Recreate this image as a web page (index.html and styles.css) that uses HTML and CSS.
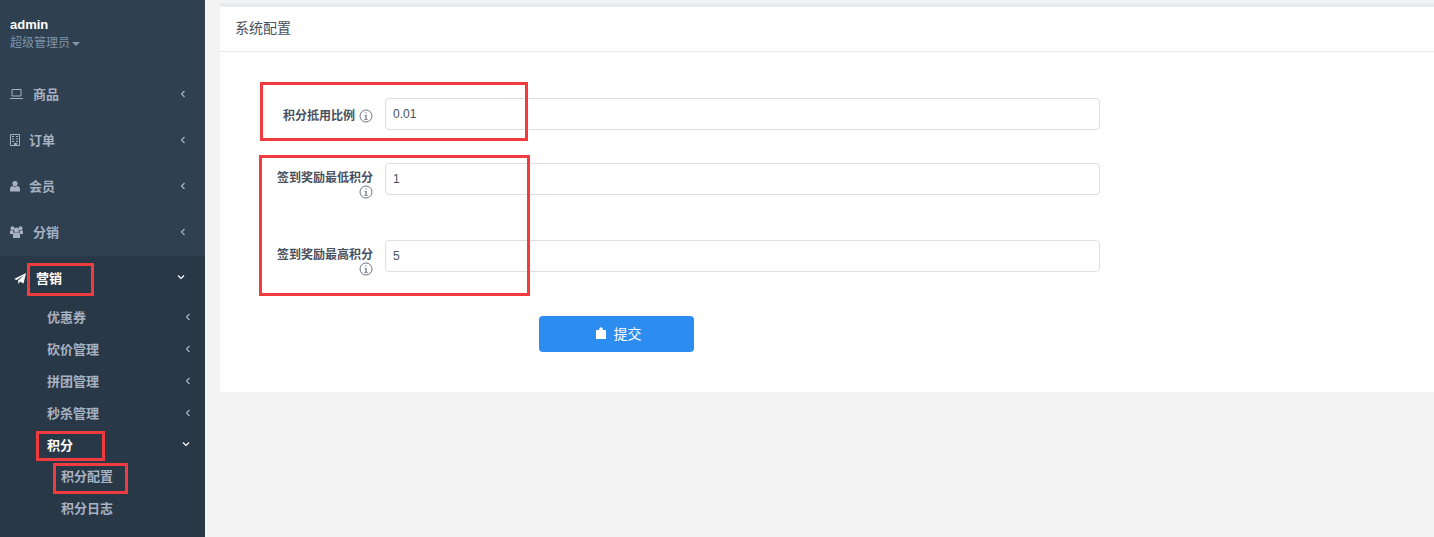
FILE: index.html
```html
<!DOCTYPE html>
<html lang="zh-CN">
<head>
  <meta charset="UTF-8">
  <meta name="viewport" content="width=device-width, initial-scale=1.0">
  <title>系统配置</title>
  <link rel="stylesheet" href="styles.css">
</head>
<body>
  <div class="layout">

    <aside class="sidebar">
      <div class="profile">
        <div class="profile-name">admin</div>
        <div class="profile-role">超级管理员<span class="caret"></span></div>
      </div>

      <ul class="menu">
        <li class="menu-item">
          <svg class="menu-icon icon-wide" viewBox="0 0 13 12"><path d="M2 1.500h9v6.500H2zM0 10.500h13" fill="none" stroke="currentColor"/></svg>
          <span class="menu-text">商品</span>
          <svg class="arrow" viewBox="0 0 6 8"><path d="M4.500 1 1.500 4l3 3" fill="none" stroke="currentColor" stroke-width="1.2"/></svg>
        </li>
        <li class="menu-item">
          <svg class="menu-icon icon-narrow" viewBox="0 0 10 12"><path d="M.5 .5h9v11h-9z" fill="none" stroke="currentColor"/><path d="M2 2.500h2M6 2.500h2M2 5h2M6 5h2M2 7.500h2M6 7.500h2" stroke="currentColor"/><path d="M4 9h3v2.500H4z" fill="currentColor"/></svg>
          <span class="menu-text">订单</span>
          <svg class="arrow" viewBox="0 0 6 8"><path d="M4.500 1 1.500 4l3 3" fill="none" stroke="currentColor" stroke-width="1.2"/></svg>
        </li>
        <li class="menu-item">
          <svg class="menu-icon icon-narrow" viewBox="0 0 10 12"><circle cx="5" cy="3.500" r="2.600" fill="currentColor"/><path d="M0 11.500V9c0-2 1.500-3 2.800-3 .6.500 1.300.8 2.200.8S6.600 6.500 7.200 6C8.500 6 10 7 10 9v2.500z" fill="currentColor"/></svg>
          <span class="menu-text">会员</span>
          <svg class="arrow" viewBox="0 0 6 8"><path d="M4.500 1 1.500 4l3 3" fill="none" stroke="currentColor" stroke-width="1.2"/></svg>
        </li>
        <li class="menu-item">
          <svg class="menu-icon icon-wide" viewBox="0 0 13 12"><circle cx="2.500" cy="2.200" r="2" fill="currentColor"/><circle cx="10.500" cy="2.200" r="2" fill="currentColor"/><circle cx="6.500" cy="4" r="2.500" fill="currentColor"/><path d="M0 8V5.500c0-1 1-1.200 2-1.200L3.500 5v3zM13 8V5.500c0-1-1-1.200-2-1.200L9.500 5v3zM3 12V8.500C3 7 4 6.500 5 6.500h3c1 0 2 .5 2 2V12z" fill="currentColor"/></svg>
          <span class="menu-text">分销</span>
          <svg class="arrow" viewBox="0 0 6 8"><path d="M4.500 1 1.500 4l3 3" fill="none" stroke="currentColor" stroke-width="1.2"/></svg>
        </li>
        <li class="menu-open">
          <div class="menu-item menu-active">
            <svg class="menu-icon icon-plane" viewBox="0 0 12 11"><path d="M12 0 9.500 10.500 6 8.500 4.500 11 4 7.800 10 2 2.800 7 0 6z" fill="currentColor"/></svg>
            <span class="menu-text">营销</span>
            <svg class="arrow-down" viewBox="0 0 8 6"><path d="M1 1.500l3 3 3-3" fill="none" stroke="currentColor" stroke-width="1.2"/></svg>
          </div>
          <ul class="submenu">
            <li class="sub-item">优惠券<svg class="arrow" viewBox="0 0 6 8"><path d="M4.500 1 1.500 4l3 3" fill="none" stroke="currentColor" stroke-width="1.2"/></svg></li>
            <li class="sub-item">砍价管理<svg class="arrow" viewBox="0 0 6 8"><path d="M4.500 1 1.500 4l3 3" fill="none" stroke="currentColor" stroke-width="1.2"/></svg></li>
            <li class="sub-item">拼团管理<svg class="arrow" viewBox="0 0 6 8"><path d="M4.500 1 1.500 4l3 3" fill="none" stroke="currentColor" stroke-width="1.2"/></svg></li>
            <li class="sub-item">秒杀管理<svg class="arrow" viewBox="0 0 6 8"><path d="M4.500 1 1.500 4l3 3" fill="none" stroke="currentColor" stroke-width="1.2"/></svg></li>
            <li class="sub-item sub-active">积分<svg class="arrow-down" viewBox="0 0 8 6"><path d="M1 1.500l3 3 3-3" fill="none" stroke="currentColor" stroke-width="1.2"/></svg></li>
            <li class="third-item">积分配置</li>
            <li class="third-item">积分日志</li>
          </ul>
        </li>
      </ul>
    </aside>

    <main class="main">
      <section class="panel">
        <div class="panel-title">系统配置</div>
        <form class="config-form">
          <div class="form-row">
            <label class="form-label label-single">积分抵用比例<svg class="info" viewBox="0 0 14 14"><circle cx="7" cy="7" r="6" fill="none" stroke="currentColor" stroke-width=".8"/><path d="M6.500 3.500h1v1h-1zM5.500 6h2v4.200H9v.6H5v-.6h1.500V6.600h-1z" fill="currentColor"/></svg></label>
            <input class="form-input" value="0.01">
          </div>
          <div class="form-row">
            <label class="form-label">签到奖励最低积分<svg class="info" viewBox="0 0 14 14"><circle cx="7" cy="7" r="6" fill="none" stroke="currentColor" stroke-width=".8"/><path d="M6.500 3.500h1v1h-1zM5.500 6h2v4.200H9v.6H5v-.6h1.500V6.600h-1z" fill="currentColor"/></svg></label>
            <input class="form-input" value="1">
          </div>
          <div class="form-row">
            <label class="form-label">签到奖励最高积分<svg class="info" viewBox="0 0 14 14"><circle cx="7" cy="7" r="6" fill="none" stroke="currentColor" stroke-width=".8"/><path d="M6.500 3.500h1v1h-1zM5.500 6h2v4.200H9v.6H5v-.6h1.500V6.600h-1z" fill="currentColor"/></svg></label>
            <input class="form-input" value="5">
          </div>
          <button class="submit" type="button">
            <svg class="submit-icon" viewBox="0 0 10 12"><path d="M0 3h3C3.200 1.500 4 .3 5 .3S6.800 1.500 7 3h3v9H0z" fill="currentColor"/></svg>提交
          </button>
        </form>
      </section>
    </main>
  </div>

  <!-- annotations drawn on top of the screenshot -->
  <div class="mark mark-rate"></div>
  <div class="mark mark-sign"></div>
  <div class="mark mark-market"></div>
  <div class="mark mark-points"></div>
  <div class="mark mark-config"></div>
</body>
</html>
```

FILE: styles.css
```css
* {
  box-sizing: border-box;
}
body {
  margin: 0;
  height: 537px;
  overflow: hidden;
  background-color: #f3f3f4;
  font-family: "Liberation Sans", "Noto Sans CJK SC", sans-serif;
  color: #495060;
}
ul {
  list-style: none;
  margin: 0;
  padding: 0;
}
.layout {
  display: flex;
  height: 537px;
}

/* sidebar */
.sidebar {
  flex: 0 0 205px;
  background-color: #2f4050;
  color: #a7b1c2;
  font-size: 13px;
  font-weight: bold;
}
.profile {
  height: 70px;
  padding: 17px 0 0 10px;
}
.profile-name {
  color: #fff;
  line-height: 15px;
}
.profile-role {
  margin-top: 4px;
  color: #8095a8;
  font-size: 12px;
  font-weight: normal;
  line-height: 15px;
}
.caret {
  display: inline-block;
  margin-left: 2px;
  vertical-align: middle;
  border-top: 4px solid #8095a8;
  border-left: 4px solid transparent;
  border-right: 4px solid transparent;
}
.menu-item {
  display: flex;
  align-items: center;
  height: 46px;
  padding: 0 19px 0 10px;
}
.menu-icon {
  flex: none;
  display: block;
  margin-top: 2px;
}
.icon-wide {
  width: 13px;
  height: 12px;
  margin-right: 10px;
}
.icon-narrow {
  width: 10px;
  height: 12px;
  margin-right: 9px;
}
.icon-plane {
  width: 12px;
  height: 11px;
  margin-left: 4px;
  margin-right: 10px;
}
.menu-text {
  flex: 1;
}
.arrow {
  flex: none;
  width: 6px;
  height: 8px;
  margin-top: 2px;
}
.arrow-down {
  flex: none;
  width: 8px;
  height: 6px;
}
.menu-open {
  height: 281px;
  margin-top: 2px;
  background-color: #293846;
}
.menu-active {
  height: 44px;
  padding-bottom: 2px;
  color: #fff;
}
.menu-active .arrow-down {
  margin-right: 1px;
}
.sub-item {
  display: flex;
  align-items: center;
  justify-content: space-between;
  height: 32px;
  padding: 0 14px 0 47px;
}
.sub-active {
  color: #fff;
}
.sub-active .arrow-down {
  margin-right: 1px;
}
.third-item {
  height: 32px;
  padding-left: 61px;
  line-height: 34px;
}

/* content */
.main {
  flex: 1;
  padding: 3px 0 0 15px;
}
.panel {
  height: 389px;
  background-color: #fff;
  border-top: 4px solid #e7eaec;
}
.panel-title {
  height: 45px;
  padding-left: 15px;
  border-bottom: 1px solid #e7eaec;
  font-size: 14px;
  line-height: 43px;
  color: #495060;
}
.config-form {
  padding: 46px 0 0 45px;
}
.form-row {
  display: flex;
  align-items: flex-start;
  margin-bottom: 33px;
}
.form-row:last-of-type {
  margin-bottom: 32px;
}
.form-label {
  flex: 0 0 108px;
  margin-right: 12px;
  padding: 8px 0 8px;
  text-align: right;
  font-size: 12px;
  font-weight: bold;
  line-height: 14px;
  color: #495060;
}
.label-single {
  padding: 11px 0 0;
}
.info {
  width: 14px;
  height: 14px;
  margin-left: 4px;
  vertical-align: -3px;
}
.form-input {
  width: 715px;
  height: 32px;
  padding: 0 7px;
  border: 1px solid #dddee1;
  border-radius: 4px;
  font-family: inherit;
  font-size: 12px;
  color: #495060;
  outline: none;
}
.submit {
  display: flex;
  align-items: center;
  justify-content: center;
  width: 155px;
  height: 36px;
  margin-left: 274px;
  padding: 0 0 3px 4px;
  border: none;
  border-radius: 4px;
  background-color: #2d8cf0;
  color: #fff;
  font-family: inherit;
  font-size: 14px;
}
.submit-icon {
  width: 10px;
  height: 12px;
  margin-right: 8px;
}

/* red annotation boxes */
.mark {
  position: absolute;
  border: 3px solid #f23b3f;
}
.mark-rate {
  left: 260px;
  top: 82px;
  width: 268px;
  height: 59px;
}
.mark-sign {
  left: 259px;
  top: 155px;
  width: 271px;
  height: 141px;
}
.mark-market {
  left: 27px;
  top: 263px;
  width: 67px;
  height: 33px;
}
.mark-points {
  left: 36px;
  top: 431px;
  width: 69px;
  height: 30px;
}
.mark-config {
  left: 53px;
  top: 463px;
  width: 75px;
  height: 31px;
}
```
